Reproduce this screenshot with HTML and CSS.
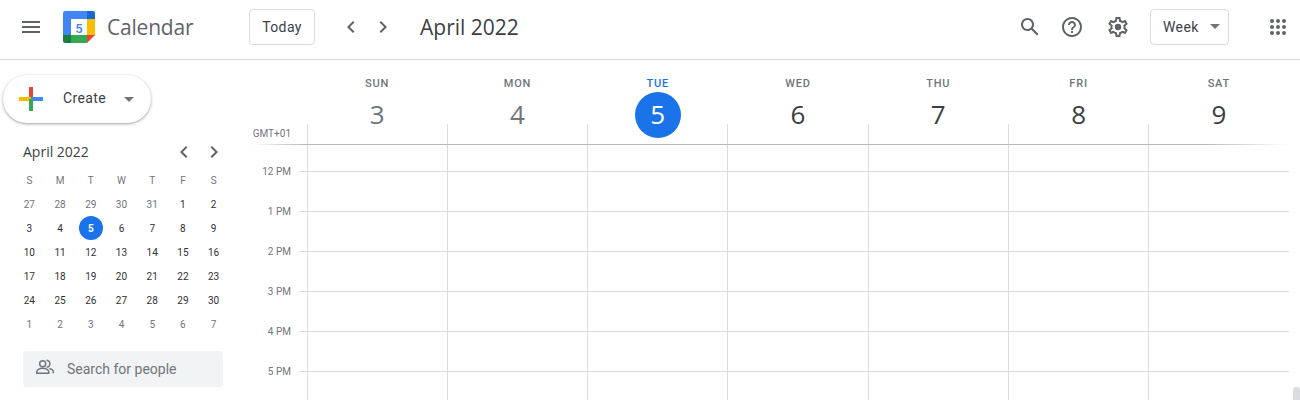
FILE: index.html
```html
<!DOCTYPE html>
<html lang="en">
<head>
    <meta charset="UTF-8">
    <meta name="viewport" content="width=device-width, initial-scale=1.0">
    <title>Calendar - Week of April 3, 2022</title>
    <link rel="stylesheet" href="styles.css">
</head>
<body>
    <!-- Top bar -->
    <header class="topbar">
        <svg class="icon menu-icon" viewBox="0 0 24 24"><path d="M3 18h18v-2H3v2zm0-5h18v-2H3v2zm0-7v2h18V6H3z"/></svg>
        <svg class="logo" viewBox="0 0 32 32">
            <path fill="#4285f4" d="M2 0h22v8H8v16H0V2a2 2 0 0 1 2-2z"/>
            <path fill="#1967d2" d="M24 0h6a2 2 0 0 1 2 2v6h-8z"/>
            <rect fill="#fbbc04" x="24" y="8" width="8" height="16"/>
            <rect fill="#34a853" x="8" y="24" width="16" height="8"/>
            <path fill="#188038" d="M0 24h8v8H2a2 2 0 0 1-2-2z"/>
            <path fill="#ea4335" d="M24 24h8l-8 8z"/>
            <rect fill="#fff" x="8" y="8" width="16" height="16"/>
            <text class="logo-num" x="16" y="21.5" text-anchor="middle">5</text>
        </svg>
        <span class="brand">Calendar</span>
        <button class="outline-btn today-btn">Today</button>
        <svg class="icon prev-icon" viewBox="0 0 24 24"><path d="M15.41 7.41L14 6l-6 6 6 6 1.41-1.41L10.83 12z"/></svg>
        <svg class="icon next-icon" viewBox="0 0 24 24"><path d="M8.59 16.59L10 18l6-6-6-6-1.41 1.41L13.17 12z"/></svg>
        <h1 class="period">April 2022</h1>
        <div class="topbar-right">
            <svg class="icon" viewBox="0 0 24 24"><path d="M20.49 19l-5.73-5.73C15.53 12.2 16 10.91 16 9.5 16 5.91 13.09 3 9.5 3S3 5.91 3 9.5 5.91 16 9.5 16c1.41 0 2.7-.47 3.77-1.24L19 20.49 20.49 19zM5 9.5C5 7.01 7.01 5 9.5 5S14 7.01 14 9.5 11.99 14 9.5 14 5 11.99 5 9.5z"/></svg>
            <svg class="icon help-icon" viewBox="0 0 24 24"><path d="M11 18h2v-2h-2v2zm1-16C6.48 2 2 6.48 2 12s4.48 10 10 10 10-4.48 10-10S17.52 2 12 2zm0 18c-4.41 0-8-3.59-8-8s3.59-8 8-8 8 3.59 8 8-3.59 8-8 8zm0-14c-2.21 0-4 1.79-4 4h2c0-1.1.9-2 2-2s2 .9 2 2c0 2-3 1.75-3 5h2c0-2.25 3-2.5 3-5 0-2.21-1.79-4-4-4z"/></svg>
            <svg class="icon gear-icon" viewBox="0 0 24 24"><path d="M19.43 12.98c.04-.32.07-.64.07-.98 0-.34-.03-.66-.07-.98l2.11-1.65c.19-.15.24-.42.12-.64l-2-3.46c-.09-.16-.26-.25-.44-.25-.06 0-.12.01-.17.03l-2.49 1c-.52-.4-1.08-.73-1.69-.98l-.38-2.65C14.46 2.18 14.25 2 14 2h-4c-.25 0-.46.18-.49.42l-.38 2.65c-.61.25-1.17.59-1.69.98l-2.49-1c-.06-.02-.12-.03-.18-.03-.17 0-.34.09-.43.25l-2 3.46c-.13.22-.07.49.12.64l2.11 1.65c-.04.32-.07.65-.07.98 0 .33.03.66.07.98l-2.11 1.65c-.19.15-.24.42-.12.64l2 3.46c.09.16.26.25.44.25.06 0 .12-.01.17-.03l2.49-1c.52.4 1.08.73 1.69.98l.38 2.65c.03.24.24.42.49.42h4c.25 0 .46-.18.49-.42l.38-2.65c.61-.25 1.17-.59 1.69-.98l2.49 1c.06.02.12.03.18.03.17 0 .34-.09.43-.25l2-3.46c.12-.22.07-.49-.12-.64l-2.11-1.65zm-1.98-1.71c.04.31.05.52.05.73 0 .21-.02.43-.05.73l-.14 1.13.89.7 1.08.84-.7 1.21-1.27-.51-1.04-.42-.9.68c-.43.32-.84.56-1.25.73l-1.06.43-.16 1.13-.2 1.35h-1.4l-.19-1.35-.16-1.13-1.06-.43c-.43-.18-.83-.41-1.23-.71l-.91-.7-1.06.43-1.27.51-.7-1.21 1.08-.84.89-.7-.14-1.13c-.03-.31-.05-.54-.05-.74s.02-.43.05-.73l.14-1.13-.89-.7-1.08-.84.7-1.21 1.27.51 1.04.42.9-.68c.43-.32.84-.56 1.25-.73l1.06-.43.16-1.13.2-1.35h1.39l.19 1.35.16 1.13 1.06.43c.43.18.83.41 1.23.71l.91.7 1.06-.43 1.27-.51.7 1.21-1.07.85-.89.7.14 1.13z"/><circle cx="12" cy="12" r="3.2"/></svg>
            <button class="outline-btn view-btn">Week<span class="caret"></span></button>
            <svg class="icon apps-icon" viewBox="0 0 24 24">
                <circle cx="6" cy="6" r="2"/><circle cx="12" cy="6" r="2"/><circle cx="18" cy="6" r="2"/>
                <circle cx="6" cy="12" r="2"/><circle cx="12" cy="12" r="2"/><circle cx="18" cy="12" r="2"/>
                <circle cx="6" cy="18" r="2"/><circle cx="12" cy="18" r="2"/><circle cx="18" cy="18" r="2"/>
            </svg>
        </div>
    </header>

    <div class="main">
        <!-- Left column -->
        <aside class="sidebar">
            <button class="create-btn">
                <svg class="plus-icon" viewBox="0 0 24 24">
                    <rect fill="#ea4335" x="10" y="0" width="4" height="12"/>
                    <rect fill="#fbbc04" x="0" y="10" width="12" height="4"/>
                    <rect fill="#4285f4" x="12" y="10" width="12" height="4"/>
                    <rect fill="#34a853" x="10" y="12" width="4" height="12"/>
                </svg>
                <span class="create-label">Create</span>
                <span class="caret"></span>
            </button>

            <div class="mini-head">
                <span class="mini-title">April 2022</span>
                <svg class="icon mini-prev" viewBox="0 0 24 24"><path d="M15.41 7.41L14 6l-6 6 6 6 1.41-1.41L10.83 12z"/></svg>
                <svg class="icon mini-next" viewBox="0 0 24 24"><path d="M8.59 16.59L10 18l6-6-6-6-1.41 1.41L13.17 12z"/></svg>
            </div>
            <div class="mini-cal">
                <span class="dow">S</span><span class="dow">M</span><span class="dow">T</span><span class="dow">W</span><span class="dow">T</span><span class="dow">F</span><span class="dow">S</span>
                <span class="other">27</span><span class="other">28</span><span class="other">29</span><span class="other">30</span><span class="other">31</span><span>1</span><span>2</span>
                <span>3</span><span>4</span><span class="selected">5</span><span>6</span><span>7</span><span>8</span><span>9</span>
                <span>10</span><span>11</span><span>12</span><span>13</span><span>14</span><span>15</span><span>16</span>
                <span>17</span><span>18</span><span>19</span><span>20</span><span>21</span><span>22</span><span>23</span>
                <span>24</span><span>25</span><span>26</span><span>27</span><span>28</span><span>29</span><span>30</span>
                <span class="other">1</span><span class="other">2</span><span class="other">3</span><span class="other">4</span><span class="other">5</span><span class="other">6</span><span class="other">7</span>
            </div>

            <div class="people-search">
                <svg class="people-icon" viewBox="0 0 22 22">
                    <circle cx="8.7" cy="5.7" r="3"/>
                    <path d="M2.75 15.25v-1.5c0-2.2 3.5-3.5 6-3.5s6 1.3 6 3.5v1.5z"/>
                    <path d="M12.5 2.3a3.4 3.4 0 0 1 0 6.8"/>
                    <path d="M15.3 10.5c2 .5 4 1.6 4 3.3v1.5"/>
                </svg>
                <span>Search for people</span>
            </div>
        </aside>

        <!-- Week grid -->
        <section class="week">
            <div class="day-heads">
                <div class="day-head past"><span class="dname">SUN</span><span class="dnum">3</span></div>
                <div class="day-head past"><span class="dname">MON</span><span class="dnum">4</span></div>
                <div class="day-head today"><span class="dname">TUE</span><span class="dnum">5</span></div>
                <div class="day-head"><span class="dname">WED</span><span class="dnum">6</span></div>
                <div class="day-head"><span class="dname">THU</span><span class="dnum">7</span></div>
                <div class="day-head"><span class="dname">FRI</span><span class="dnum">8</span></div>
                <div class="day-head"><span class="dname">SAT</span><span class="dnum">9</span></div>
            </div>

            <div class="row allday">
                <span class="hour-label">GMT+01</span>
                <div class="cells"><i></i><i></i><i></i><i></i><i></i><i></i><i></i></div>
            </div>
            <div class="row first"><span class="hour-label">12 PM</span><div class="cells"><i></i><i></i><i></i><i></i><i></i><i></i><i></i></div></div>
            <div class="row"><span class="hour-label">1 PM</span><div class="cells"><i></i><i></i><i></i><i></i><i></i><i></i><i></i></div></div>
            <div class="row"><span class="hour-label">2 PM</span><div class="cells"><i></i><i></i><i></i><i></i><i></i><i></i><i></i></div></div>
            <div class="row"><span class="hour-label">3 PM</span><div class="cells"><i></i><i></i><i></i><i></i><i></i><i></i><i></i></div></div>
            <div class="row"><span class="hour-label">4 PM</span><div class="cells"><i></i><i></i><i></i><i></i><i></i><i></i><i></i></div></div>
            <div class="row"><span class="hour-label">5 PM</span><div class="cells"><i></i><i></i><i></i><i></i><i></i><i></i><i></i></div></div>
            <div class="row last"><div class="cells"><i></i><i></i><i></i><i></i><i></i><i></i><i></i></div></div>
        </section>
    </div>

    <div class="scroll-thumb"></div>
</body>
</html>
```

FILE: styles.css
```css
* {
    box-sizing: border-box;
}

html, body {
    height: 400px;
    overflow: hidden;
}

body {
    margin: 0;
    font-family: Roboto, Arial, sans-serif;
    color: #3c4043;
    background-color: #fff;
}

.icon {
    width: 24px;
    height: 24px;
    fill: #5f6368;
    flex: none;
}

/* Top bar */
.topbar {
    display: flex;
    align-items: center;
    height: 60px;
    padding: 0 10px 6px 19px;
    border-bottom: 1px solid #dadce0;
}

.logo {
    width: 32px;
    height: 32px;
    margin-left: 20px;
    flex: none;
}

.logo-num {
    font-family: Roboto, Arial, sans-serif;
    font-size: 13px;
    font-weight: 500;
    fill: #4285f4;
}

.brand {
    margin-left: 12px;
    width: 142px;
    font-family: "Open Sans", Arial, sans-serif;
    font-size: 21px;
    letter-spacing: -.2px;
    color: #5f6368;
}

.outline-btn {
    height: 36px;
    border: 1px solid #dadce0;
    border-radius: 4px;
    background-color: #fff;
    font-family: Roboto, Arial, sans-serif;
    font-size: 14px;
    font-weight: 400;
    letter-spacing: .4px;
    color: #3c4043;
    padding: 0;
}

.today-btn {
    width: 66px;
}

.prev-icon {
    margin-left: 24px;
}

.next-icon {
    margin-left: 8px;
}

.period {
    margin: 0 0 0 25px;
    font-family: "Open Sans", Arial, sans-serif;
    font-size: 21px;
    font-weight: 400;
    color: #3c4043;
}

.topbar-right {
    display: flex;
    align-items: center;
    margin-left: auto;
}

.help-icon {
    margin-left: 18px;
}

.gear-icon {
    margin-left: 22px;
}

.view-btn {
    display: flex;
    align-items: center;
    width: 79px;
    margin-left: 20px;
    padding-left: 12px;
}

.view-btn .caret {
    margin-left: 11px;
}

.apps-icon {
    margin-left: 37px;
}

.caret {
    width: 0;
    height: 0;
    border-left: 5px solid transparent;
    border-right: 5px solid transparent;
    border-top: 5px solid #70757a;
}

/* Sidebar */
.main {
    display: flex;
}

.sidebar {
    width: 243px;
    flex: none;
}

.create-btn {
    display: flex;
    align-items: center;
    width: 148px;
    height: 48px;
    margin: 15px 0 0 3px;
    padding: 0 0 2px 16px;
    border: none;
    border-radius: 24px;
    background-color: #fff;
    box-shadow: 0 1px 2px 0 rgba(60, 64, 67, .3), 0 1px 3px 1px rgba(60, 64, 67, .15);
    font-family: Roboto, Arial, sans-serif;
    font-size: 14px;
    font-weight: 400;
    letter-spacing: .4px;
    color: #3c4043;
}

.plus-icon {
    width: 24px;
    height: 24px;
    margin-right: 20px;
    margin-bottom: -2px;
}

.create-label {
    width: 61px;
    text-align: left;
}

.create-btn .caret {
    margin-bottom: -2px;
}

/* Mini month */
.mini-head {
    display: flex;
    align-items: center;
    height: 24px;
    margin-top: 17px;
    padding-left: 23px;
}

.mini-title {
    width: 149px;
    margin-top: -2px;
    font-family: "Open Sans", Arial, sans-serif;
    font-size: 14px;
    color: #3c4043;
}

.mini-next {
    margin-left: 6px;
}

.mini-cal {
    display: grid;
    grid-template-columns: repeat(7, 1fr);
    grid-template-rows: 23px;
    grid-auto-rows: 24px;
    width: 215px;
    margin: 5px 0 0 14px;
    font-size: 10px;
    font-weight: 400;
}

.mini-cal span {
    display: flex;
    align-items: center;
    justify-content: center;
    color: #2f3134;
}

.mini-cal .dow {
    color: #70757a;
}

.mini-cal .other {
    color: #70757a;
}

.mini-cal .selected {
    width: 24px;
    height: 24px;
    margin: 0 auto;
    border-radius: 50%;
    background-color: #1a73e8;
    color: #fff;
    font-weight: 700;
}

.people-search {
    display: flex;
    align-items: center;
    width: 200px;
    height: 36px;
    margin: 15px 0 0 23px;
    padding-left: 11px;
    border-radius: 4px;
    background-color: #f1f3f4;
    font-size: 14px;
    color: #70757a;
}

.people-icon {
    width: 22px;
    height: 22px;
    margin-right: 11px;
    fill: none;
    stroke: #70757a;
    stroke-width: 1.5;
    flex: none;
}

/* Week grid */
.week {
    width: 1046px;
    flex: none;
}

.day-heads {
    display: grid;
    grid-template-columns: repeat(7, 1fr);
    height: 64px;
    margin-left: 64px;
    width: 982px;
}

.day-head {
    display: flex;
    flex-direction: column;
    align-items: center;
    padding-top: 17px;
    height: 64px;
}

.dname {
    font-size: 11px;
    font-weight: 500;
    line-height: 13px;
    letter-spacing: .8px;
    color: #70757a;
}

.dnum {
    display: flex;
    align-items: center;
    justify-content: center;
    width: 46px;
    height: 46px;
    margin-top: 2px;
    padding-bottom: 2px;
    border-radius: 50%;
    font-family: "Open Sans", Arial, sans-serif;
    font-size: 26px;
    color: #3c4043;
    flex: none;
}

.day-head.past .dnum {
    color: #70757a;
}

.day-head.today .dname {
    color: #1a73e8;
}

.day-head.today .dnum {
    background-color: #1a73e8;
    color: #fff;
}

.row {
    display: flex;
    height: 40px;
    width: 1046px;
}

.row.allday {
    height: 21px;
    position: relative;
}

/* rule under the all-day row, fades out at both ends */
.row.allday::after {
    content: "";
    position: absolute;
    left: 8px;
    right: 0;
    bottom: 0;
    height: 1px;
    background: linear-gradient(to right, rgba(185, 185, 185, 0), #b9b9b9 5%, #b9b9b9 92%, rgba(185, 185, 185, 0));
}

.row.first {
    height: 27px;
}

.hour-label {
    width: 48px;
    margin-bottom: -6px;
    align-self: flex-end;
    text-align: right;
    font-size: 10px;
    line-height: 12px;
    color: #70757a;
    flex: none;
}

.row.allday .hour-label {
    margin-bottom: 5px;
}

/* 8px stub of the hour line sits left of the first column */
.cells {
    display: grid;
    grid-template-columns: repeat(7, 1fr);
    width: 989.56px;
    flex: none;
    margin-left: 8px;
    padding-left: 7.6px;
    border-bottom: 1px solid #dadce0;
}

.row.allday .cells {
    border-bottom: none;
}

.row.last .cells {
    width: 981.96px;
    margin-left: 63.6px;
    padding-left: 0;
    border-bottom: none;
}

.cells i {
    border-left: 1px solid #dadce0;
}

.scroll-thumb {
    position: absolute;
    top: 387px;
    left: 1293px;
    width: 7px;
    height: 13px;
    border-radius: 3px 3px 0 0;
    background-color: #dadce0;
}
```
